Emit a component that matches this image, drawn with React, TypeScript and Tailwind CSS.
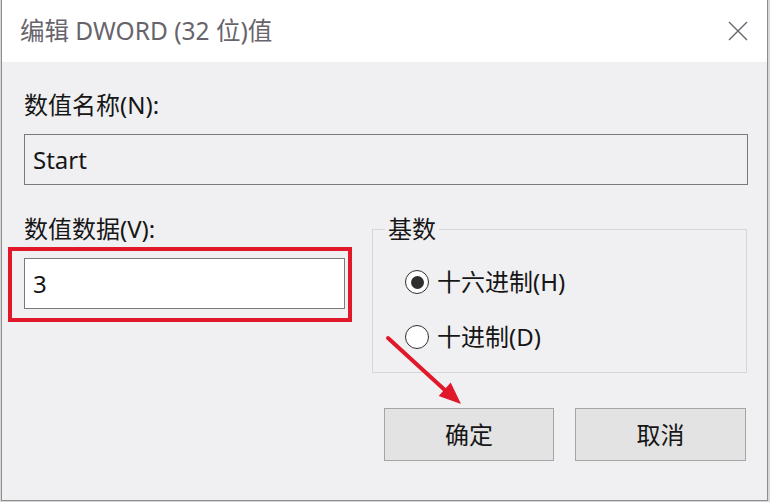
import React from "react";

const font = "font-['Noto_Sans','Noto_Sans_CJK_SC',sans-serif]";

function Radio({ checked, label }: { checked: boolean; label: string }) {
  return (
    <div className="flex items-center h-[30px]">
      <span className="w-[24px] h-[24px] rounded-full border-[1.5px] border-[#2e2e2e] bg-white flex items-center justify-center">
        {checked && <span className="w-[13px] h-[13px] rounded-full bg-[#2e2e2e]" />}
      </span>
      <span className="ml-[8px] text-[24px] leading-[30px] text-[#161616]">{label}</span>
    </div>
  );
}

export default function App() {
  return (
    <div className={`w-[770px] h-[502px] bg-[#d8d8d8] relative overflow-hidden ${font}`}>
      <div className="ml-[1px] w-[767px] h-[501px] border-x border-b border-[#8c8c8c] bg-[#f0f0f2] flex flex-col">
        {/* Title bar */}
        <div className="h-[62px] bg-white flex items-center justify-between pl-[18px] pr-[19px] shrink-0">
          <span className="text-[24.5px] leading-[30px] text-[#68646c]">编辑 DWORD (32 位)值</span>
          <svg width="20" height="20" viewBox="0 0 20 20">
            <path d="M1 1 L19 19 M19 1 L1 19" stroke="#68646c" strokeWidth="1.4" fill="none" />
          </svg>
        </div>

        {/* Body */}
        <div className="pl-[22px] pr-[19px] text-[#161616]">
          <div className="mt-[28px] text-[24px] leading-[30px]">数值名称(N):</div>
          <div className="mt-[14px] h-[51px] w-[724px] border border-[#7a7a7a] bg-[#f0f0f2] flex items-center pl-[8px] text-[24px] leading-[30px]">
            Start
          </div>

          <div className="mt-[29px] grid grid-cols-[321px_375px] gap-x-[27px]">
            <div className="flex flex-col">
              <div className="text-[24px] leading-[30px]">数值数据(V):</div>
              <div className="mt-[3px] -ml-[16px] w-[344px] border-4 border-[#e1182a] pl-[12px] pr-[3px] pt-[7px] pb-[9px]">
                <div className="h-[51px] w-[321px] border border-[#7a7a7a] bg-white flex items-center pl-[8px] text-[24px] leading-[30px]">
                  3
                </div>
              </div>
            </div>

            <fieldset className="border border-[#d6d6d8] pb-[20px] m-0 p-0">
              <legend className="ml-[12px] px-[3px] text-[24px] leading-[30px]">基数</legend>
              <div className="pl-[32px]">
                <div className="mt-[23px]">
                  <Radio checked label="十六进制(H)" />
                </div>
                <div className="mt-[25px]">
                  <Radio checked={false} label="十进制(D)" />
                </div>
              </div>
            </fieldset>
          </div>

          <div className="mt-[35px] flex justify-end gap-[21px] pr-[2px]">
            <button className="w-[170px] h-[53px] border border-[#a5a5a5] bg-[#e3e3e3] text-[24px] leading-[30px] text-[#161616]">
              确定
            </button>
            <button className="w-[171px] h-[53px] border border-[#a5a5a5] bg-[#e3e3e3] text-[24px] leading-[30px] text-[#161616]">
              取消
            </button>
          </div>
        </div>
      </div>

      {/* Red annotation arrow */}
      <svg className="absolute left-0 top-0 pointer-events-none" width="770" height="502">
        <line x1="388" y1="338" x2="447" y2="392" stroke="#e1182a" strokeWidth="4" strokeLinecap="round" />
        <polygon points="461,404 438.7,395.9 450.7,382.5" fill="#e1182a" />
      </svg>
    </div>
  );
}
